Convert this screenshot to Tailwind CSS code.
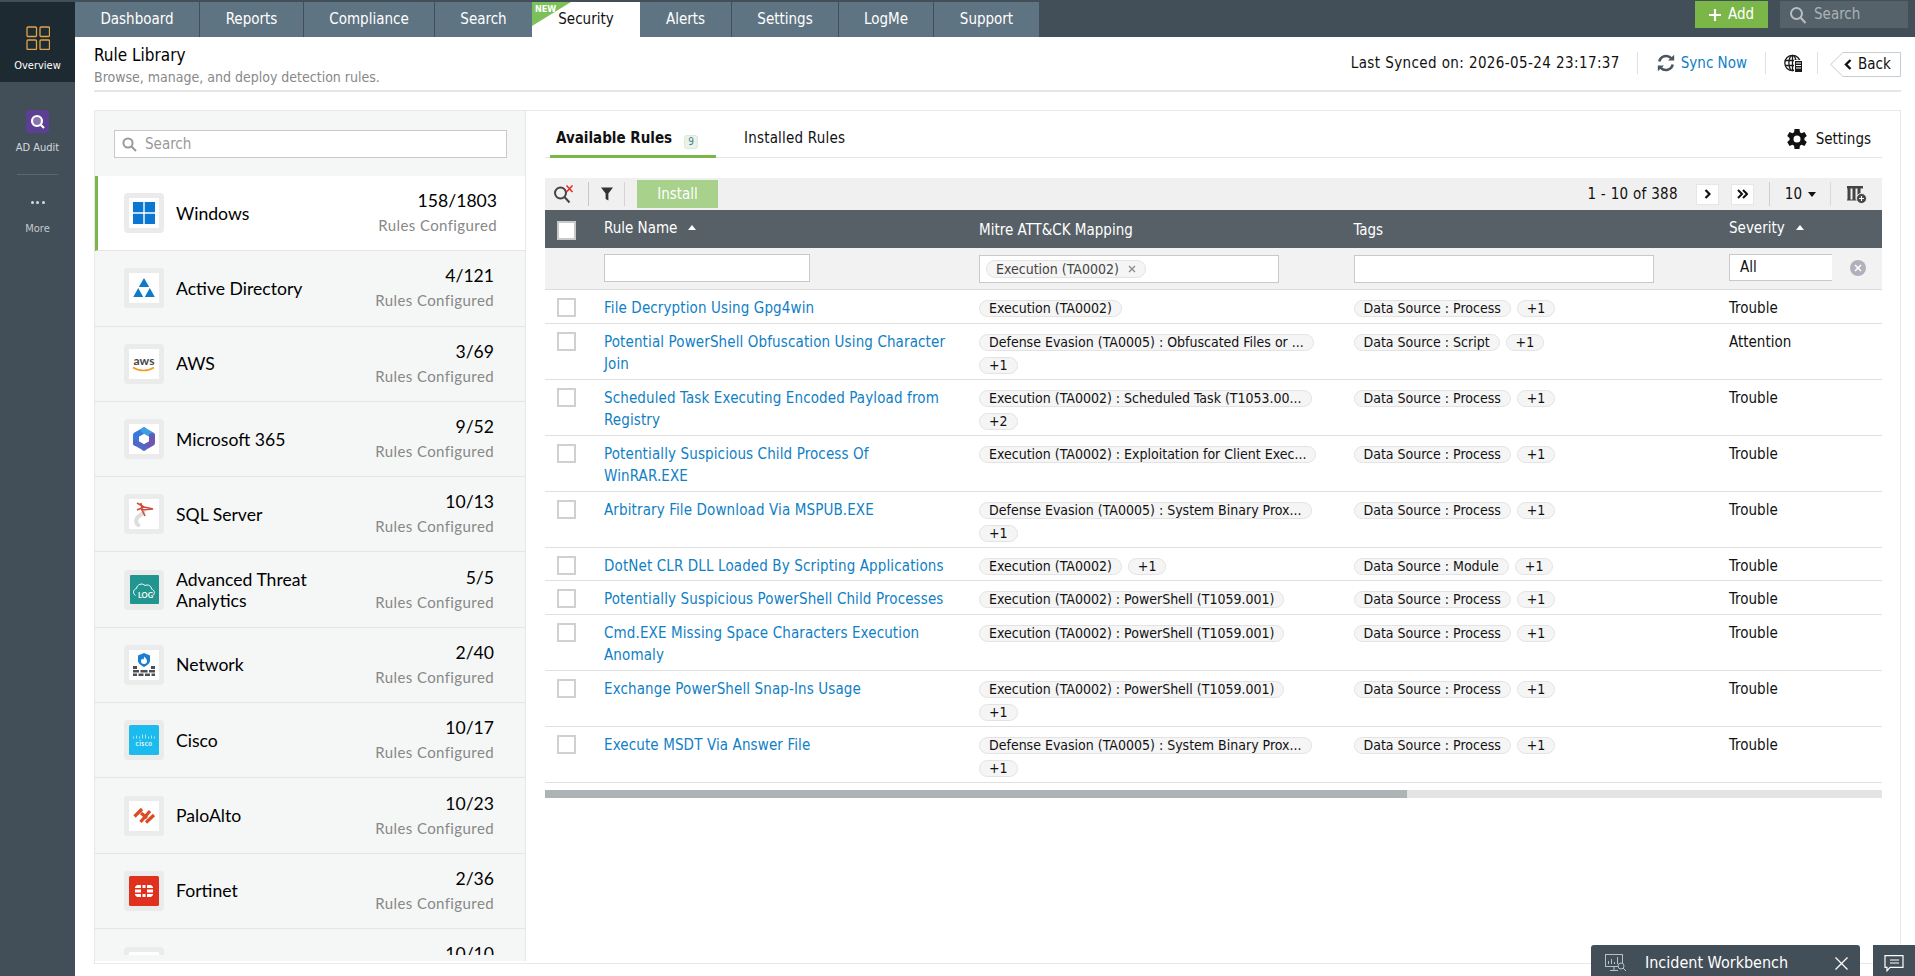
<!DOCTYPE html>
<html lang="en">

<head>
  <meta charset="UTF-8" />
  <title>Rule Library</title>
  <script src="https://cdn.jsdelivr.net/npm/@tailwindcss/browser@4"></script>
</head>

<body class="h-[976px] w-[1915px] overflow-hidden flex bg-white text-[15px] text-[#111] font-['DejaVu_Sans_Condensed','DejaVu_Sans',sans-serif]">

  <!-- Left nav -->
  <aside class="w-[75px] shrink-0 bg-[#434f58] pt-[2px] flex flex-col items-center text-[11px]">
    <div class="w-full h-[80px] bg-[#1e2a32] flex flex-col items-center pt-[24px] text-white">
      <svg width="24" height="24" viewBox="0 0 24 24" fill="none" stroke="#e0a44a" stroke-width="1.3">
        <rect x="1" y="1" width="9.5" height="9.5" rx="1" />
        <rect x="14" y="1" width="9.5" height="9.5" rx="1" />
        <rect x="1" y="14" width="9.5" height="9.5" rx="1" />
        <rect x="14" y="14" width="9.500" height="9.5" rx="1" />
      </svg>
      <span class="mt-[8px]">Overview</span>
    </div>
    <div class="mt-[28px] w-[23px] h-[23px] rounded-[3px] bg-[#5c3f92] flex items-center justify-center">
      <svg width="17" height="17" viewBox="0 0 17 17" fill="none" stroke="#fff" stroke-width="2.2">
        <circle cx="8" cy="8" r="5" fill="#d9d2e8" fill-opacity=".35" />
        <path d="M11 11l4 4" />
      </svg>
    </div>
    <span class="mt-[7px] text-[#d5dadd]">AD Audit</span>
    <div class="mt-[17px] w-[41px] border-t border-[#5c6870]"></div>
    <div class="mt-[26px] flex gap-[2.5px]">
      <i class="w-[3px] h-[3px] rounded-full bg-[#d5dadd]"></i>
      <i class="w-[3px] h-[3px] rounded-full bg-[#d5dadd]"></i>
      <i class="w-[3px] h-[3px] rounded-full bg-[#d5dadd]"></i>
    </div>
    <span class="mt-[17px] text-[#c2c9cd]">More</span>
  </aside>

  <main class="flex-1 min-w-0 flex flex-col">
    <!-- Top tabs -->
    <nav class="h-[37px] shrink-0 bg-[#434f58] flex items-start">
      <div class="flex h-[35px] mt-[2px] text-white text-center leading-[35px]">
        <a class="w-[125px] bg-[#5f7482] border-r border-[#434f58]">Dashboard</a>
        <a class="w-[104px] bg-[#5f7482] border-r border-[#434f58]">Reports</a>
        <a class="w-[131px] bg-[#5f7482] border-r border-[#434f58]">Compliance</a>
        <a class="w-[97px] bg-[#5f7482]">Search</a>
        <a class="relative w-[108px] bg-white text-[#111]">
          Security
          <span class="absolute left-0 top-0 w-0 h-0 border-t-[24px] border-r-[39px] border-t-[#7cc05a] border-r-transparent"></span>
          <span class="absolute left-[3px] top-[1px] text-[9px] leading-[12px] font-bold text-white">NEW</span>
        </a>
        <a class="w-[92px] bg-[#5f7482] border-r border-[#434f58]">Alerts</a>
        <a class="w-[107px] bg-[#5f7482] border-r border-[#434f58]">Settings</a>
        <a class="w-[95px] bg-[#5f7482] border-r border-[#434f58]">LogMe</a>
        <a class="w-[105px] bg-[#5f7482]">Support</a>
      </div>
      <div class="ml-auto flex items-start gap-[12px] mr-[7px] mt-[1px]">
        <button class="w-[73px] h-[27px] bg-[#7ab648] text-white flex items-center justify-center gap-[7px]">
          <svg width="12" height="12" viewBox="0 0 12 12" fill="none" stroke="#fff" stroke-width="2.2">
            <path d="M6 0v12M0 6h12" />
          </svg>
          Add
        </button>
        <div class="w-[128px] h-[27px] bg-[#56626a] flex items-center pl-[9px] gap-[7px] text-[#aab3b8]">
          <svg width="18" height="18" viewBox="0 0 18 18" fill="none" stroke="#b7bec3" stroke-width="2">
            <circle cx="7.5" cy="7.5" r="5.5" />
            <path d="M11.5 11.5l5 5.5" />
          </svg>
          Search
        </div>
      </div>
    </nav>

    <!-- Page title -->
    <header class="h-[55px] shrink-0 ml-[19px] mr-[14px] border-b-2 border-[#e6e6e6] flex items-start">
      <div class="pt-[8px]">
        <h1 class="text-[17px] leading-[21px] text-black">Rule Library</h1>
        <p class="mt-[1px] text-[14px] leading-[20px] text-[#888]">Browse, manage, and deploy detection rules.</p>
      </div>
      <div class="ml-auto flex items-center h-[26px] mt-[13px]">
        <span class="tracking-[.4px]">Last Synced on: 2026-05-24 23:17:37</span>
        <i class="ml-[17px] h-[22px] border-l border-[#e0e0e0]"></i>
        <svg class="ml-[19px]" width="18" height="18" viewBox="0 0 18 18" fill="none" stroke="#4a5560" stroke-width="2.6">
          <path d="M2.3 7.5A7 7 0 0 1 14.2 4.2" />
          <path d="M15.7 10.5A7 7 0 0 1 3.8 13.8" />
          <path d="M11 6.6h6.2V0.8z" fill="#4a5560" stroke="none" />
          <path d="M7 11.4H0.8v5.8z" fill="#4a5560" stroke="none" />
        </svg>
        <a class="ml-[6px] text-[#0f80c5]">Sync Now</a>
        <i class="ml-[18px] h-[22px] border-l border-[#e0e0e0]"></i>
        <svg class="ml-[18px]" width="19" height="19" viewBox="0 0 19 19" fill="none" stroke="#1a1a1a" stroke-width="1.3">
          <circle cx="8.5" cy="9" r="7.7" fill="#fff" />
          <ellipse cx="8.5" cy="9" rx="3.6" ry="7.7" />
          <path d="M1 6.5h15M1 11.5h15M8.5 1.3v15.4" />
          <rect x="10.5" y="6.5" width="8" height="12" fill="#1a1a1a" stroke="#fff" stroke-width="1" />
          <path d="M12 9h5M12 11.5h5M12 14h5" stroke="#fff" stroke-width="1" />
        </svg>
        <i class="ml-[14px] h-[22px] border-l border-[#e0e0e0]"></i>
        <div class="relative ml-[12px] self-start mt-[2px] h-[25px] w-[71px]">
          <svg class="absolute inset-0" width="71" height="25" viewBox="0 0 71 25" fill="none" stroke="#c8cdd0">
            <path d="M13 .5H70.500V24.500H13L.7 12.500z" fill="#fff" />
          </svg>
          <svg class="absolute left-[14px] top-[7px]" width="8" height="11" viewBox="0 0 8 11" fill="none" stroke="#111" stroke-width="2.400">
            <path d="M6.500 1L2 5.500 6.500 10" />
          </svg>
          <span class="absolute left-[28px] top-0 leading-[25px]">Back</span>
        </div>
      </div>
    </header>

    <!-- Rule library panel -->
    <section class="mt-[18px] ml-[19px] mr-[14px] h-[854px] border border-[#e8e8e8] flex">
      <!-- Source list -->
      <div class="w-[431px] shrink-0 bg-[#f5f7f6] border-r border-[#e8e8e8] h-[850px] font-['Lato',sans-serif]">
        <div class="h-[65px] pt-[19px] pl-[19px]">
          <div class="w-[393px] h-[28px] bg-white border border-[#c9c9c9] flex items-center pl-[7px] gap-[8px] text-[#999] text-[15px] font-['DejaVu_Sans_Condensed','DejaVu_Sans',sans-serif]">
            <svg width="15" height="15" viewBox="0 0 15 15" fill="none" stroke="#9a9a9a" stroke-width="2">
              <circle cx="6" cy="6" r="4.6" />
              <path d="M9.5 9.5l4.5 4.5" />
            </svg>
            Search
          </div>
        </div>
        <div class="h-[779px] overflow-hidden">

          <div class="h-[75.3px] relative z-10 w-[432px] bg-white border-l-[3px] border-[#7ab648] border-b border-b-[#e4e6e5] flex items-center pl-[26px] pr-[30px]">
            <div class="w-[40px] h-[40px] rounded-[4px] bg-[#ebebeb] flex items-center justify-center shrink-0">
              <div class="w-[30px] h-[30px] bg-white flex items-center justify-center">
                <svg width="22" height="22" viewBox="0 0 22 22" fill="#0a78d2">
                  <path d="M0 0h10.3v10.3H0zM11.7 0H22v10.3H11.7zM0 11.7h10.3V22H0zM11.7 11.7H22V22H11.7z" />
                </svg>
              </div>
            </div>
            <span class="ml-[12px] text-[17.6px] leading-[21px] text-black">Windows</span>
            <div class="ml-auto text-right">
              <div class="text-[17.6px] leading-[24px] text-black">158/1803</div>
              <div class="text-[15px] leading-[24px] tracking-[.4px] text-[#888]">Rules Configured</div>
            </div>
          </div>

          <div class="h-[75.3px] border-b border-[#e4e6e5] flex items-center pl-[29px] pr-[31px]">
            <div class="w-[40px] h-[40px] rounded-[4px] bg-[#ebebeb] flex items-center justify-center shrink-0">
              <div class="w-[30px] h-[30px] bg-white flex items-center justify-center">
                <svg width="22" height="20" viewBox="0 0 22 20" fill="#0f7ac8">
                  <path d="M11 0l5.2 9H5.800zM5.200 10l5 9H0.300zM16.800 10l5 9H11.800z" />
                </svg>
              </div>
            </div>
            <span class="ml-[12px] text-[17.6px] leading-[21px] text-black">Active Directory</span>
            <div class="ml-auto text-right">
              <div class="text-[17.6px] leading-[24px] text-black">4/121</div>
              <div class="text-[15px] leading-[24px] tracking-[.4px] text-[#888]">Rules Configured</div>
            </div>
          </div>

          <div class="h-[75.3px] border-b border-[#e4e6e5] flex items-center pl-[29px] pr-[31px]">
            <div class="w-[40px] h-[40px] rounded-[4px] bg-[#ebebeb] flex items-center justify-center shrink-0">
              <div class="w-[30px] h-[30px] bg-white flex items-center justify-center">
                <svg width="26" height="22" viewBox="0 0 26 22">
                  <text x="13" y="12" text-anchor="middle" font-family="Lato" font-size="12" font-weight="700" fill="#444">aws</text>
                  <path d="M2 14.500c6 4 15 4 21 0" fill="none" stroke="#f39a1f" stroke-width="1.600" />
                </svg>
              </div>
            </div>
            <span class="ml-[12px] text-[17.6px] leading-[21px] text-black">AWS</span>
            <div class="ml-auto text-right">
              <div class="text-[17.6px] leading-[24px] text-black">3/69</div>
              <div class="text-[15px] leading-[24px] tracking-[.4px] text-[#888]">Rules Configured</div>
            </div>
          </div>

          <div class="h-[75.3px] border-b border-[#e4e6e5] flex items-center pl-[29px] pr-[31px]">
            <div class="w-[40px] h-[40px] rounded-[4px] bg-[#ebebeb] flex items-center justify-center shrink-0">
              <div class="w-[30px] h-[30px] bg-white flex items-center justify-center">
                <svg width="24" height="24" viewBox="0 0 24 24" fill="none" stroke-width="6" stroke-linecap="round" stroke-linejoin="round">
                  <path d="M12 3.500L4 8v8" stroke="#3a78dc" />
                  <path d="M12 3.500L20 8" stroke="#3f9fe0" />
                  <path d="M20 9v7l-8 4.500" stroke="#6c58b4" />
                  <path d="M12 20.500L4 16" stroke="#5268c8" />
                  <circle cx="12" cy="12" r="2.200" fill="#fff" stroke="none" />
                </svg>
              </div>
            </div>
            <span class="ml-[12px] text-[17.6px] leading-[21px] text-black">Microsoft 365</span>
            <div class="ml-auto text-right">
              <div class="text-[17.6px] leading-[24px] text-black">9/52</div>
              <div class="text-[15px] leading-[24px] tracking-[.4px] text-[#888]">Rules Configured</div>
            </div>
          </div>

          <div class="h-[75.3px] border-b border-[#e4e6e5] flex items-center pl-[29px] pr-[31px]">
            <div class="w-[40px] h-[40px] rounded-[4px] bg-[#ebebeb] flex items-center justify-center shrink-0">
              <div class="w-[30px] h-[30px] bg-white flex items-center justify-center">
                <svg width="22" height="26" viewBox="0 0 22 26" fill="none">
                  <path d="M7 25c-5-2-5-7-1-10 3-2 5-3 5-5" stroke="#ddd" stroke-width="4" />
                  <path d="M4 2l7 4 9 2-11 1 3 6M4 9l7-3M8 2l1 7" stroke="#d14b3a" stroke-width="1.600" />
                </svg>
              </div>
            </div>
            <span class="ml-[12px] text-[17.6px] leading-[21px] text-black">SQL Server</span>
            <div class="ml-auto text-right">
              <div class="text-[17.6px] leading-[24px] text-black">10/13</div>
              <div class="text-[15px] leading-[24px] tracking-[.4px] text-[#888]">Rules Configured</div>
            </div>
          </div>

          <div class="h-[75.3px] border-b border-[#e4e6e5] flex items-center pl-[29px] pr-[31px]">
            <div class="w-[40px] h-[40px] rounded-[4px] bg-[#ebebeb] flex items-center justify-center shrink-0">
              <svg width="29" height="29" viewBox="0 0 29 29">
                <rect width="29" height="29" rx="1" fill="#21958f" />
                <path d="M5.500 20.500c-3-2-2.500-6 1-7 .5-4 5.500-6 8.500-3 3-1.500 6.500 .5 6.500 3.500 3 1 3.500 4 2 6" fill="none" stroke="#fff" stroke-width="1" />
                <text x="15.500" y="23" text-anchor="middle" font-family="Lato" font-size="7.500" font-weight="700" fill="#fff">LOG</text>
              </svg>
            </div>
            <span class="ml-[12px] text-[17.6px] leading-[21px] text-black">Advanced Threat<br />Analytics</span>
            <div class="ml-auto text-right">
              <div class="text-[17.6px] leading-[24px] text-black">5/5</div>
              <div class="text-[15px] leading-[24px] tracking-[.4px] text-[#888]">Rules Configured</div>
            </div>
          </div>

          <div class="h-[75.3px] border-b border-[#e4e6e5] flex items-center pl-[29px] pr-[31px]">
            <div class="w-[40px] h-[40px] rounded-[4px] bg-[#ebebeb] flex items-center justify-center shrink-0">
              <div class="w-[30px] h-[30px] bg-white flex items-center justify-center">
                <svg width="22" height="23" viewBox="0 0 22 23">
                  <path d="M11 0l6 2.500v5c0 3-3 5-6 6.500-3-1.500-6-3.500-6-6.500v-5z" fill="#1b7fd1" />
                  <path d="M11 3.500c2 2 3 3 3 4.500a3 3 0 0 1-6 0c0-1.500 1-2 1.500-2.500 0 1 .5 1 1 1 .5-1 .5-2 .5-3z" fill="#fff" />
                  <path d="M0 13h4v3H0zM18 13h4v3h-4zM0 17h6v2.500H0zM7.500 17h7v2.500h-7zM16 17h6v2.500h-6zM0 20.500h4V23H0zM5.500 20.500h5V23h-5zM12 20.500h5V23h-5zM18.500 20.500H22V23h-3.500z" fill="#4a4f55" />
                </svg>
              </div>
            </div>
            <span class="ml-[12px] text-[17.6px] leading-[21px] text-black">Network</span>
            <div class="ml-auto text-right">
              <div class="text-[17.6px] leading-[24px] text-black">2/40</div>
              <div class="text-[15px] leading-[24px] tracking-[.4px] text-[#888]">Rules Configured</div>
            </div>
          </div>

          <div class="h-[75.3px] border-b border-[#e4e6e5] flex items-center pl-[29px] pr-[31px]">
            <div class="w-[40px] h-[40px] rounded-[4px] bg-[#ebebeb] flex items-center justify-center shrink-0">
              <svg width="30" height="30" viewBox="0 0 30 30">
                <rect width="30" height="30" rx="1.500" fill="#1bbbee" />
                <path d="M4.500 11.500v2M7.500 10.500v3M10.500 11.500v2M13.500 9.500v4M16.500 9.500v4M19.500 11.500v2M22.500 10.500v3M25.500 11.500v2" stroke="#d4f3fc" stroke-width=".8" />
                <text x="15" y="20.500" text-anchor="middle" font-family="Lato" font-size="6.500" font-weight="700" letter-spacing=".5" fill="#e8f9fe">cisco</text>
              </svg>
            </div>
            <span class="ml-[12px] text-[17.6px] leading-[21px] text-black">Cisco</span>
            <div class="ml-auto text-right">
              <div class="text-[17.6px] leading-[24px] text-black">10/17</div>
              <div class="text-[15px] leading-[24px] tracking-[.4px] text-[#888]">Rules Configured</div>
            </div>
          </div>

          <div class="h-[75.3px] border-b border-[#e4e6e5] flex items-center pl-[29px] pr-[31px]">
            <div class="w-[40px] h-[40px] rounded-[4px] bg-[#ebebeb] flex items-center justify-center shrink-0">
              <div class="w-[30px] h-[30px] bg-white flex items-center justify-center">
                <svg width="23" height="17" viewBox="0 0 23 17" fill="none" stroke="#dc4a26" stroke-width="3.200">
                  <path d="M1.500 9.500L9 2M7.500 15L17 4M8 6l6 5M13 15.500l8-7.500" />
                </svg>
              </div>
            </div>
            <span class="ml-[12px] text-[17.6px] leading-[21px] text-black">PaloAlto</span>
            <div class="ml-auto text-right">
              <div class="text-[17.6px] leading-[24px] text-black">10/23</div>
              <div class="text-[15px] leading-[24px] tracking-[.4px] text-[#888]">Rules Configured</div>
            </div>
          </div>

          <div class="h-[75.3px] border-b border-[#e4e6e5] flex items-center pl-[29px] pr-[31px]">
            <div class="w-[40px] h-[40px] rounded-[4px] bg-[#ebebeb] flex items-center justify-center shrink-0">
              <svg width="30" height="30" viewBox="0 0 30 30">
                <rect width="30" height="30" rx="1.500" fill="#e0301e" />
                <path d="M8 9h4v3H6v-1zM13.500 9h3v3h-3zM18 9h4l2 2v1h-6zM6 13.500h6v3H6zM18 13.500h6v3h-6zM6 18h6v3H8l-2-2zM13.500 18h3v3h-3zM18 18h6v1l-2 2h-4z" fill="#fff" />
              </svg>
            </div>
            <span class="ml-[12px] text-[17.6px] leading-[21px] text-black">Fortinet</span>
            <div class="ml-auto text-right">
              <div class="text-[17.6px] leading-[24px] text-black">2/36</div>
              <div class="text-[15px] leading-[24px] tracking-[.4px] text-[#888]">Rules Configured</div>
            </div>
          </div>

          <div class="h-[75.3px] flex items-start pt-[18px] pl-[29px] pr-[31px]">
            <div class="w-[40px] h-[40px] rounded-[4px] bg-[#ebebeb] flex items-center justify-center shrink-0">
              <div class="w-[30px] h-[30px] bg-white"></div>
            </div>
            <div class="ml-auto text-right text-[17.6px] leading-[24px] text-black -mt-[5px]">10/10</div>
          </div>

        </div>
      </div>

      <!-- Rules -->
      <div class="flex-1 min-w-0 pl-[19px] pr-[18px]">
        <div class="h-[47px] border-b border-[#e4e4e4] flex items-start">
          <div class="relative h-[47px] w-[166px] ml-[5px] border-b-[3px] border-[#7ab648] pt-[17px] pl-[6px] font-bold leading-[20px] whitespace-nowrap">
            Available Rules
            <span class="absolute left-[134px] top-[24px] w-[14px] h-[14px] rounded-[3px] bg-[#eaf3e6] border border-[#dde8d6] text-[10px] leading-[12px] text-center text-[#3f7fa0] font-normal">9</span>
          </div>
          <span class="ml-[28px] mt-[17px] leading-[20px] tracking-[.2px]">Installed Rules</span>
          <div class="ml-auto flex items-center gap-[8px] mt-[17px] mr-[11px] leading-[20px]">
            <svg width="22" height="22" viewBox="1 1 22 22" fill="#111">
              <path d="M19.400 13a7.600 7.600 0 0 0 0-2l2.400-1.900-2.300-4-2.900 1.200a7.600 7.600 0 0 0-1.700-1L14.500 2h-5l-.4 3.300a7.600 7.600 0 0 0-1.700 1L4.500 5.100l-2.300 4L4.600 11a7.600 7.600 0 0 0 0 2l-2.400 1.900 2.300 4 2.900-1.200a7.600 7.600 0 0 0 1.700 1l.4 3.300h5l.4-3.300a7.600 7.600 0 0 0 1.700-1l2.900 1.200 2.300-4zM12 15.500a3.500 3.500 0 1 1 0-7 3.500 3.500 0 0 1 0 7z" />
            </svg>
            Settings
          </div>
        </div>

        <!-- Toolbar -->
        <div class="mt-[20px] h-[32px] bg-[#f0f0f0] flex items-center pl-[8px] pr-[15px]">
          <svg width="21" height="20" viewBox="0 0 21 20" fill="none" stroke="#444" stroke-width="2">
            <circle cx="7.500" cy="9" r="5.500" />
            <path d="M11.500 13l5 5.500" />
            <path d="M13.500 1.500l6 6.500M19.500 1.500l-6 6.500" stroke="#e0322a" stroke-width="1.600" />
          </svg>
          <i class="ml-[14px] h-[24px] border-l border-[#c8c8c8]"></i>
          <svg class="ml-[12px]" width="12" height="14" viewBox="0 0 13 14" fill="#333">
            <path d="M0 0h13L8 6.500V14L5 12.500v-6z" />
          </svg>
          <i class="ml-[11px] h-[24px] border-l border-[#d4d4d4]"></i>
          <button class="ml-[12px] w-[81px] h-[28px] bg-[#a8d18b] text-white">Install</button>
          <span class="ml-auto tracking-[.3px]">1 - 10 of 388</span>
          <button class="ml-[18px] w-[23px] h-[21px] bg-white border border-[#e6e6e6] flex items-center justify-center">
            <svg width="7" height="10" viewBox="0 0 7 10" fill="none" stroke="#111" stroke-width="2.200"><path d="M1.500 1l4 4-4 4" /></svg>
          </button>
          <button class="ml-[12px] w-[23px] h-[21px] bg-white border border-[#e6e6e6] flex items-center justify-center">
            <svg width="11" height="10" viewBox="0 0 11 10" fill="none" stroke="#111" stroke-width="2"><path d="M1 1l4 4-4 4M6 1l4 4-4 4" /></svg>
          </button>
          <i class="ml-[15px] h-[24px] border-l border-[#cfcfcf]"></i>
          <span class="ml-[15px]">10</span>
          <span class="ml-[6px] w-0 h-0 border-x-[4.500px] border-x-transparent border-t-[5px] border-t-[#111]"></span>
          <i class="ml-[14px] h-[24px] border-l border-[#d8d8d8]"></i>
          <svg class="ml-[15px]" width="21" height="19" viewBox="0 0 21 19">
            <path d="M1 1h16v2.500H1zM1.500 3.500h3V15h-3zM6.500 3.500h3V15h-3zM11.500 3.500h3V15h-3z" fill="#444" />
            <path d="M1 15h16" stroke="#444" />
            <circle cx="15.500" cy="13.500" r="5" fill="#444" stroke="#f0f0f0" />
            <path d="M15.500 11v5M13 13.500h5" stroke="#fff" stroke-width="1.200" />
          </svg>
        </div>

        <!-- Table header -->
        <div class="grid grid-cols-[59px_375px_374.500px_375.500px_153px] h-[38px] bg-[#566066] text-white">
          <div class="pl-[12px] pt-[11px]"><span class="block w-[19px] h-[19px] bg-white border-2 border-[#c9c9c9]"></span></div>
          <div class="pt-[7px] flex items-start gap-[11px]"><span>Rule Name</span><i class="mt-[8px] w-0 h-0 border-x-[4.500px] border-x-transparent border-b-[5px] border-b-white"></i></div>
          <div class="pt-[9px]">Mitre ATT&amp;CK Mapping</div>
          <div class="pt-[9px]">Tags</div>
          <div class="pt-[7px] flex items-start gap-[11px]"><span>Severity</span><i class="mt-[8px] w-0 h-0 border-x-[4.500px] border-x-transparent border-b-[5px] border-b-white"></i></div>
        </div>

        <!-- Filter row -->
        <div class="grid grid-cols-[59px_375px_374.500px_375.500px_153px] h-[42px] bg-[#f2f2f2] border-b border-[#dcdcdc]">
          <div></div>
          <div class="pt-[6px]"><div class="w-[206px] h-[28px] bg-white border border-[#c9c9c9]"></div></div>
          <div class="pt-[7px]">
            <div class="w-[300px] h-[28px] bg-white border border-[#c9c9c9] flex items-center pl-[6px]">
              <span class="h-[18px] px-[9px] rounded-full bg-[#f5f5f5] border border-[#e3e3e3] flex items-center gap-[9px] text-[14px] text-[#444]">Execution (TA0002)
                <svg width="8" height="8" viewBox="0 0 8 8" fill="none" stroke="#8a8a8a" stroke-width="1.300"><path d="M1 1l6 6M7 1L1 7" /></svg>
              </span>
            </div>
          </div>
          <div class="pt-[7px]"><div class="w-[300px] h-[28px] bg-white border border-[#c9c9c9]"></div></div>
          <div class="pt-[6px] flex items-start">
            <div class="w-[103px] h-[27px] bg-white border border-r-0 border-[#c9c9c9] pl-[10px] leading-[24px]">All</div>
            <span class="ml-[18px] mt-[6px] w-[16px] h-[16px] rounded-full bg-[#b3b0bd] flex items-center justify-center">
              <svg width="8" height="8" viewBox="0 0 8 8" fill="none" stroke="#fff" stroke-width="1.500"><path d="M1 1l6 6M7 1L1 7" /></svg>
            </span>
          </div>
        </div>

        <!-- Rows -->
        <div class="grid grid-cols-[59px_375px_374.500px_375.500px_153px] h-[34px] border-b border-[#e0e0e0] leading-[22px]">
          <div class="pl-[12px] pt-[8px]"><span class="block w-[19px] h-[19px] bg-white border-2 border-[#d0d0d0]"></span></div>
          <a class="pt-[7px] text-[#0f80c5] tracking-[.12px]">File Decryption Using Gpg4win</a>
          <div class="pt-[10px] w-[345px] flex flex-wrap gap-x-[6px] gap-y-[6px] content-start text-[14px] leading-[15px]">
            <span class="h-[17px] px-[9px] rounded-full bg-[#f5f5f5] border border-[#e3e3e3] whitespace-nowrap">Execution (TA0002)</span>
          </div>
          <div class="pt-[10px] flex gap-[6px] items-start text-[14px] leading-[15px]">
            <span class="h-[17px] px-[9px] rounded-full bg-[#f5f5f5] border border-[#e3e3e3] whitespace-nowrap">Data Source : Process</span>
            <span class="h-[17px] px-[9px] rounded-full bg-[#f5f5f5] border border-[#e3e3e3] whitespace-nowrap">+1</span>
          </div>
          <div class="pt-[7px]">Trouble</div>
        </div>

        <div class="grid grid-cols-[59px_375px_374.500px_375.500px_153px] h-[56px] border-b border-[#e0e0e0] leading-[22px]">
          <div class="pl-[12px] pt-[8px]"><span class="block w-[19px] h-[19px] bg-white border-2 border-[#d0d0d0]"></span></div>
          <a class="pt-[7px] text-[#0f80c5] tracking-[.12px]">Potential PowerShell Obfuscation Using Character<br />Join</a>
          <div class="pt-[10px] w-[345px] flex flex-wrap gap-x-[6px] gap-y-[6px] content-start text-[14px] leading-[15px]">
            <span class="h-[17px] px-[9px] rounded-full bg-[#f5f5f5] border border-[#e3e3e3] whitespace-nowrap">Defense Evasion (TA0005) : Obfuscated Files or ...</span>
            <span class="h-[17px] px-[9px] rounded-full bg-[#f5f5f5] border border-[#e3e3e3] whitespace-nowrap">+1</span>
          </div>
          <div class="pt-[10px] flex gap-[6px] items-start text-[14px] leading-[15px]">
            <span class="h-[17px] px-[9px] rounded-full bg-[#f5f5f5] border border-[#e3e3e3] whitespace-nowrap">Data Source : Script</span>
            <span class="h-[17px] px-[9px] rounded-full bg-[#f5f5f5] border border-[#e3e3e3] whitespace-nowrap">+1</span>
          </div>
          <div class="pt-[7px]">Attention</div>
        </div>

        <div class="grid grid-cols-[59px_375px_374.500px_375.500px_153px] h-[56px] border-b border-[#e0e0e0] leading-[22px]">
          <div class="pl-[12px] pt-[8px]"><span class="block w-[19px] h-[19px] bg-white border-2 border-[#d0d0d0]"></span></div>
          <a class="pt-[7px] text-[#0f80c5] tracking-[.12px]">Scheduled Task Executing Encoded Payload from<br />Registry</a>
          <div class="pt-[10px] w-[345px] flex flex-wrap gap-x-[6px] gap-y-[6px] content-start text-[14px] leading-[15px]">
            <span class="h-[17px] px-[9px] rounded-full bg-[#f5f5f5] border border-[#e3e3e3] whitespace-nowrap">Execution (TA0002) : Scheduled Task (T1053.00...</span>
            <span class="h-[17px] px-[9px] rounded-full bg-[#f5f5f5] border border-[#e3e3e3] whitespace-nowrap">+2</span>
          </div>
          <div class="pt-[10px] flex gap-[6px] items-start text-[14px] leading-[15px]">
            <span class="h-[17px] px-[9px] rounded-full bg-[#f5f5f5] border border-[#e3e3e3] whitespace-nowrap">Data Source : Process</span>
            <span class="h-[17px] px-[9px] rounded-full bg-[#f5f5f5] border border-[#e3e3e3] whitespace-nowrap">+1</span>
          </div>
          <div class="pt-[7px]">Trouble</div>
        </div>

        <div class="grid grid-cols-[59px_375px_374.500px_375.500px_153px] h-[56px] border-b border-[#e0e0e0] leading-[22px]">
          <div class="pl-[12px] pt-[8px]"><span class="block w-[19px] h-[19px] bg-white border-2 border-[#d0d0d0]"></span></div>
          <a class="pt-[7px] text-[#0f80c5] tracking-[.12px]">Potentially Suspicious Child Process Of<br />WinRAR.EXE</a>
          <div class="pt-[10px] w-[345px] flex flex-wrap gap-x-[6px] gap-y-[6px] content-start text-[14px] leading-[15px]">
            <span class="h-[17px] px-[9px] rounded-full bg-[#f5f5f5] border border-[#e3e3e3] whitespace-nowrap">Execution (TA0002) : Exploitation for Client Exec...</span>
          </div>
          <div class="pt-[10px] flex gap-[6px] items-start text-[14px] leading-[15px]">
            <span class="h-[17px] px-[9px] rounded-full bg-[#f5f5f5] border border-[#e3e3e3] whitespace-nowrap">Data Source : Process</span>
            <span class="h-[17px] px-[9px] rounded-full bg-[#f5f5f5] border border-[#e3e3e3] whitespace-nowrap">+1</span>
          </div>
          <div class="pt-[7px]">Trouble</div>
        </div>

        <div class="grid grid-cols-[59px_375px_374.500px_375.500px_153px] h-[56px] border-b border-[#e0e0e0] leading-[22px]">
          <div class="pl-[12px] pt-[8px]"><span class="block w-[19px] h-[19px] bg-white border-2 border-[#d0d0d0]"></span></div>
          <a class="pt-[7px] text-[#0f80c5] tracking-[.12px]">Arbitrary File Download Via MSPUB.EXE</a>
          <div class="pt-[10px] w-[345px] flex flex-wrap gap-x-[6px] gap-y-[6px] content-start text-[14px] leading-[15px]">
            <span class="h-[17px] px-[9px] rounded-full bg-[#f5f5f5] border border-[#e3e3e3] whitespace-nowrap">Defense Evasion (TA0005) : System Binary Prox...</span>
            <span class="h-[17px] px-[9px] rounded-full bg-[#f5f5f5] border border-[#e3e3e3] whitespace-nowrap">+1</span>
          </div>
          <div class="pt-[10px] flex gap-[6px] items-start text-[14px] leading-[15px]">
            <span class="h-[17px] px-[9px] rounded-full bg-[#f5f5f5] border border-[#e3e3e3] whitespace-nowrap">Data Source : Process</span>
            <span class="h-[17px] px-[9px] rounded-full bg-[#f5f5f5] border border-[#e3e3e3] whitespace-nowrap">+1</span>
          </div>
          <div class="pt-[7px]">Trouble</div>
        </div>

        <div class="grid grid-cols-[59px_375px_374.500px_375.500px_153px] h-[33px] border-b border-[#e0e0e0] leading-[22px]">
          <div class="pl-[12px] pt-[8px]"><span class="block w-[19px] h-[19px] bg-white border-2 border-[#d0d0d0]"></span></div>
          <a class="pt-[7px] text-[#0f80c5] tracking-[.12px]">DotNet CLR DLL Loaded By Scripting Applications</a>
          <div class="pt-[10px] w-[345px] flex flex-wrap gap-x-[6px] gap-y-[6px] content-start text-[14px] leading-[15px]">
            <span class="h-[17px] px-[9px] rounded-full bg-[#f5f5f5] border border-[#e3e3e3] whitespace-nowrap">Execution (TA0002)</span>
            <span class="h-[17px] px-[9px] rounded-full bg-[#f5f5f5] border border-[#e3e3e3] whitespace-nowrap">+1</span>
          </div>
          <div class="pt-[10px] flex gap-[6px] items-start text-[14px] leading-[15px]">
            <span class="h-[17px] px-[9px] rounded-full bg-[#f5f5f5] border border-[#e3e3e3] whitespace-nowrap">Data Source : Module</span>
            <span class="h-[17px] px-[9px] rounded-full bg-[#f5f5f5] border border-[#e3e3e3] whitespace-nowrap">+1</span>
          </div>
          <div class="pt-[7px]">Trouble</div>
        </div>

        <div class="grid grid-cols-[59px_375px_374.500px_375.500px_153px] h-[34px] border-b border-[#e0e0e0] leading-[22px]">
          <div class="pl-[12px] pt-[8px]"><span class="block w-[19px] h-[19px] bg-white border-2 border-[#d0d0d0]"></span></div>
          <a class="pt-[7px] text-[#0f80c5] tracking-[.12px]">Potentially Suspicious PowerShell Child Processes</a>
          <div class="pt-[10px] w-[345px] flex flex-wrap gap-x-[6px] gap-y-[6px] content-start text-[14px] leading-[15px]">
            <span class="h-[17px] px-[9px] rounded-full bg-[#f5f5f5] border border-[#e3e3e3] whitespace-nowrap">Execution (TA0002) : PowerShell (T1059.001)</span>
          </div>
          <div class="pt-[10px] flex gap-[6px] items-start text-[14px] leading-[15px]">
            <span class="h-[17px] px-[9px] rounded-full bg-[#f5f5f5] border border-[#e3e3e3] whitespace-nowrap">Data Source : Process</span>
            <span class="h-[17px] px-[9px] rounded-full bg-[#f5f5f5] border border-[#e3e3e3] whitespace-nowrap">+1</span>
          </div>
          <div class="pt-[7px]">Trouble</div>
        </div>

        <div class="grid grid-cols-[59px_375px_374.500px_375.500px_153px] h-[56px] border-b border-[#e0e0e0] leading-[22px]">
          <div class="pl-[12px] pt-[8px]"><span class="block w-[19px] h-[19px] bg-white border-2 border-[#d0d0d0]"></span></div>
          <a class="pt-[7px] text-[#0f80c5] tracking-[.12px]">Cmd.EXE Missing Space Characters Execution<br />Anomaly</a>
          <div class="pt-[10px] w-[345px] flex flex-wrap gap-x-[6px] gap-y-[6px] content-start text-[14px] leading-[15px]">
            <span class="h-[17px] px-[9px] rounded-full bg-[#f5f5f5] border border-[#e3e3e3] whitespace-nowrap">Execution (TA0002) : PowerShell (T1059.001)</span>
          </div>
          <div class="pt-[10px] flex gap-[6px] items-start text-[14px] leading-[15px]">
            <span class="h-[17px] px-[9px] rounded-full bg-[#f5f5f5] border border-[#e3e3e3] whitespace-nowrap">Data Source : Process</span>
            <span class="h-[17px] px-[9px] rounded-full bg-[#f5f5f5] border border-[#e3e3e3] whitespace-nowrap">+1</span>
          </div>
          <div class="pt-[7px]">Trouble</div>
        </div>

        <div class="grid grid-cols-[59px_375px_374.500px_375.500px_153px] h-[56px] border-b border-[#e0e0e0] leading-[22px]">
          <div class="pl-[12px] pt-[8px]"><span class="block w-[19px] h-[19px] bg-white border-2 border-[#d0d0d0]"></span></div>
          <a class="pt-[7px] text-[#0f80c5] tracking-[.12px]">Exchange PowerShell Snap-Ins Usage</a>
          <div class="pt-[10px] w-[345px] flex flex-wrap gap-x-[6px] gap-y-[6px] content-start text-[14px] leading-[15px]">
            <span class="h-[17px] px-[9px] rounded-full bg-[#f5f5f5] border border-[#e3e3e3] whitespace-nowrap">Execution (TA0002) : PowerShell (T1059.001)</span>
            <span class="h-[17px] px-[9px] rounded-full bg-[#f5f5f5] border border-[#e3e3e3] whitespace-nowrap">+1</span>
          </div>
          <div class="pt-[10px] flex gap-[6px] items-start text-[14px] leading-[15px]">
            <span class="h-[17px] px-[9px] rounded-full bg-[#f5f5f5] border border-[#e3e3e3] whitespace-nowrap">Data Source : Process</span>
            <span class="h-[17px] px-[9px] rounded-full bg-[#f5f5f5] border border-[#e3e3e3] whitespace-nowrap">+1</span>
          </div>
          <div class="pt-[7px]">Trouble</div>
        </div>

        <div class="grid grid-cols-[59px_375px_374.500px_375.500px_153px] h-[56px] border-b border-[#e0e0e0] leading-[22px]">
          <div class="pl-[12px] pt-[8px]"><span class="block w-[19px] h-[19px] bg-white border-2 border-[#d0d0d0]"></span></div>
          <a class="pt-[7px] text-[#0f80c5] tracking-[.12px]">Execute MSDT Via Answer File</a>
          <div class="pt-[10px] w-[345px] flex flex-wrap gap-x-[6px] gap-y-[6px] content-start text-[14px] leading-[15px]">
            <span class="h-[17px] px-[9px] rounded-full bg-[#f5f5f5] border border-[#e3e3e3] whitespace-nowrap">Defense Evasion (TA0005) : System Binary Prox...</span>
            <span class="h-[17px] px-[9px] rounded-full bg-[#f5f5f5] border border-[#e3e3e3] whitespace-nowrap">+1</span>
          </div>
          <div class="pt-[10px] flex gap-[6px] items-start text-[14px] leading-[15px]">
            <span class="h-[17px] px-[9px] rounded-full bg-[#f5f5f5] border border-[#e3e3e3] whitespace-nowrap">Data Source : Process</span>
            <span class="h-[17px] px-[9px] rounded-full bg-[#f5f5f5] border border-[#e3e3e3] whitespace-nowrap">+1</span>
          </div>
          <div class="pt-[7px]">Trouble</div>
        </div>

        <!-- Horizontal scrollbar -->
        <div class="mt-[7px] h-[8px] bg-[#e4e4e4]">
          <div class="w-[862px] h-full bg-[#aeb4b6]"></div>
        </div>
      </div>
    </section>
  </main>

  <!-- Floating bars -->
  <div class="fixed bottom-0 left-[1591px] w-[269px] h-[31px] pt-[5px] bg-[#434f58] rounded-t-[3px] flex items-center pl-[14px] text-[16px] text-white">
    <svg width="22" height="18" viewBox="0 0 22 18" fill="none" stroke="#b8c0c5">
      <rect x=".5" y=".5" width="17" height="12" />
      <path d="M9 13v3M5 16.500h8M3.500 10V7M6.500 10V5M9.500 10V8M12.500 10V3" />
      <circle cx="16" cy="12" r="3" fill="#434f58" />
      <path d="M18 14l3 3" />
    </svg>
    <span class="ml-[18px]">Incident Workbench</span>
    <svg class="ml-auto mr-[12px]" width="13" height="13" viewBox="0 0 13 13" fill="none" stroke="#fff" stroke-width="1.300">
      <path d="M.5.5l12 12M12.500.5l-12 12" />
    </svg>
  </div>
  <div class="fixed bottom-0 right-0 w-[42px] h-[31px] pt-[5px] bg-[#434f58] flex items-center justify-center">
    <svg width="20" height="17" viewBox="0 0 20 17" fill="none" stroke="#fff" stroke-width="1.200">
      <path d="M1 .7h18v11.600H6l-3 3.500v-3.500H1z" />
      <path d="M6 5h9M6 8h9" />
    </svg>
  </div>

</body>

</html>
